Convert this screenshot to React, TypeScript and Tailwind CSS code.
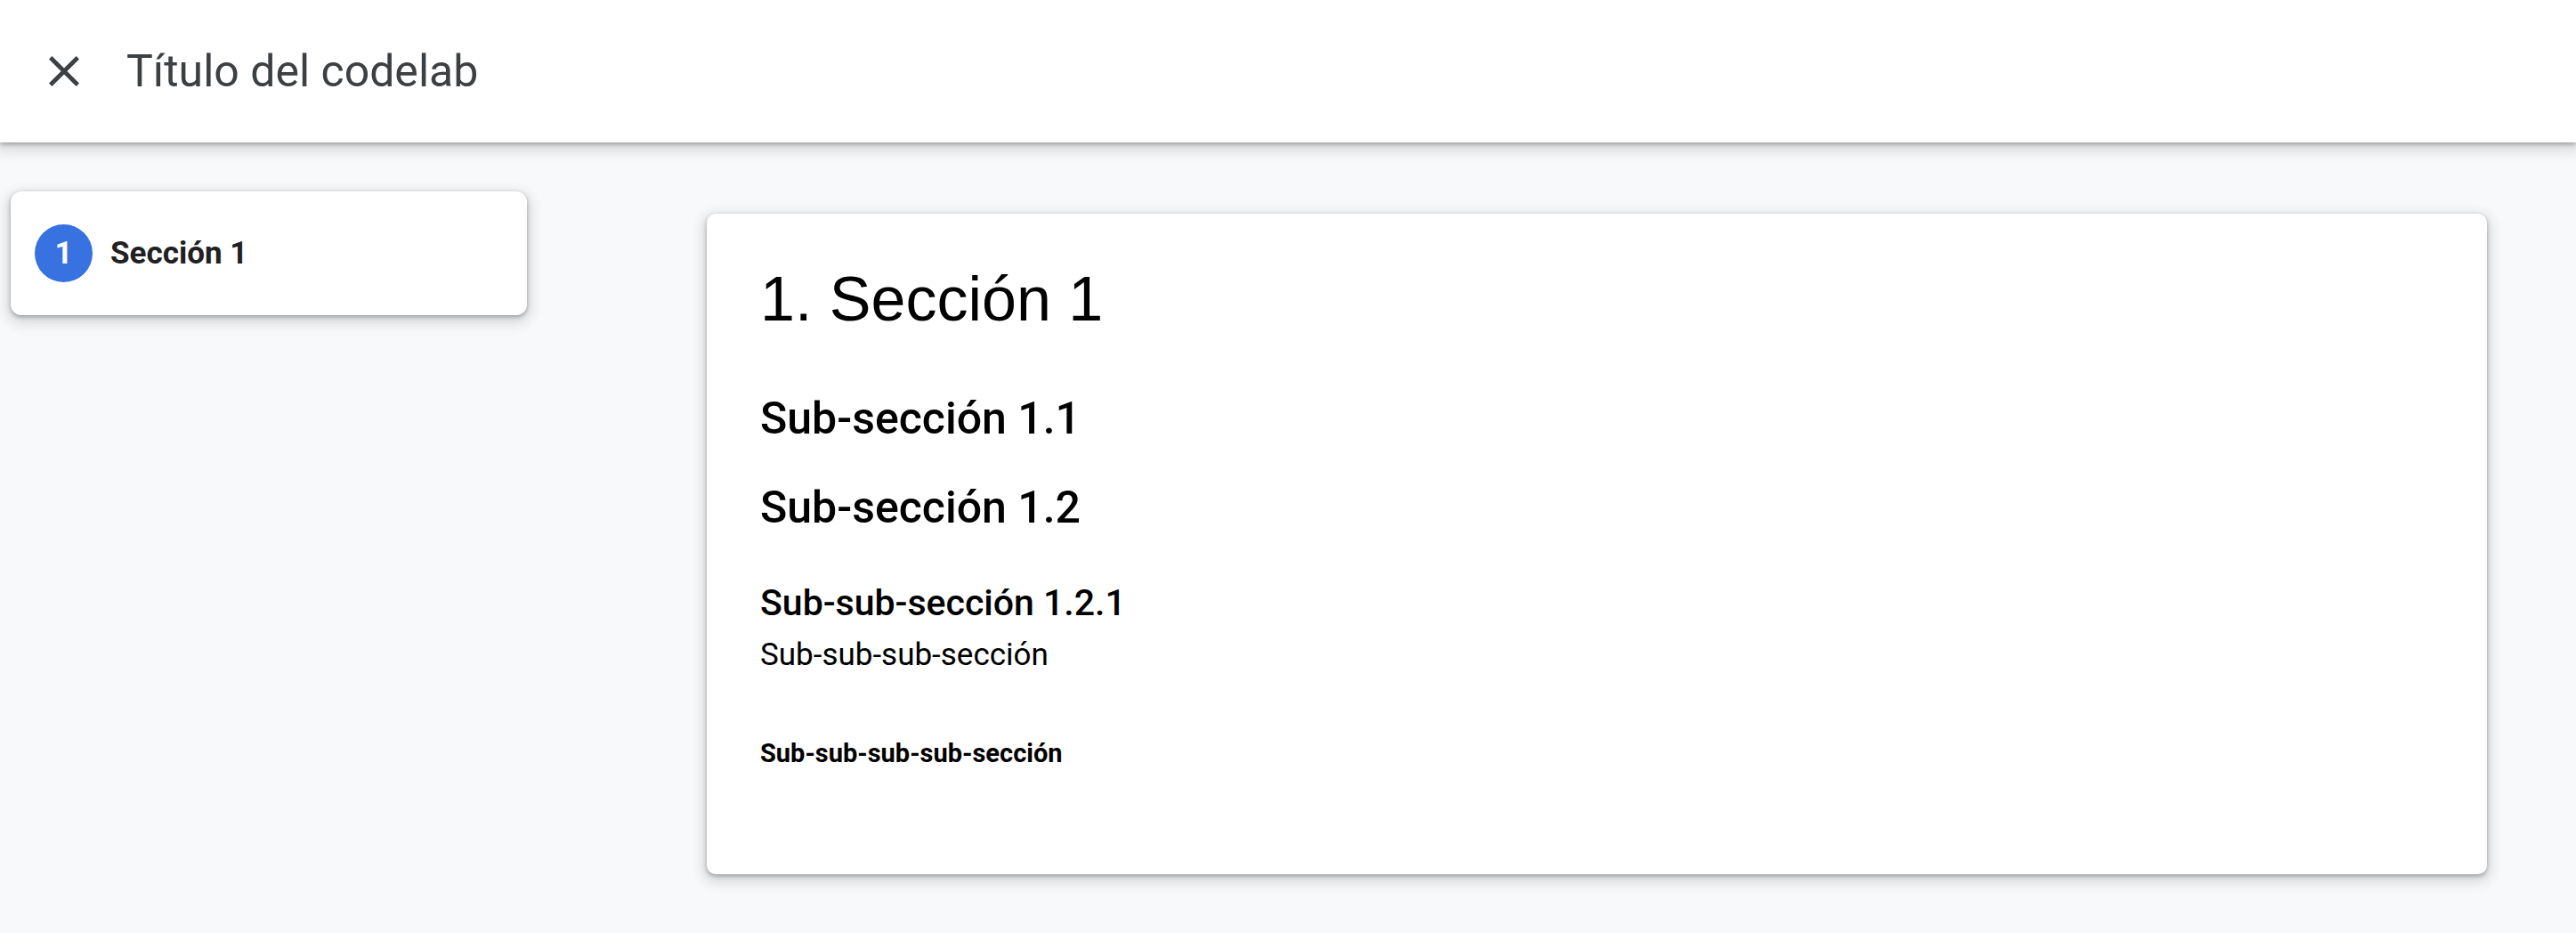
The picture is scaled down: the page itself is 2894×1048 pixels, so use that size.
import React from "react";

const steps = ["Sección 1"];

export default function App() {
  return (
    <div className="flex min-h-screen flex-col bg-[#f8f9fb] font-['Roboto',sans-serif] text-black">
      <header className="z-10 flex h-40 items-center bg-white px-12 text-[#3c4043] shadow-[0_2px_5px_rgba(0,0,0,0.3),0_5px_14px_5px_rgba(0,0,0,0.12)]">
        <button type="button" aria-label="Cerrar" className="mr-[46px] flex size-12 items-center justify-center">
          <svg viewBox="0 0 34 34" className="size-[34px] fill-current" aria-hidden="true">
            <path d="M34 3.4 30.6 0 17 13.6 3.4 0 0 3.4 13.6 17 0 30.6 3.4 34 17 20.4 30.6 34 34 30.6 20.4 17z" />
          </svg>
        </button>
        <h1 className="text-[50px] leading-[60px]">Título del codelab</h1>
      </header>
      <div className="flex flex-1 items-start">
        <nav className="w-[794px] shrink-0 pt-[55px] pl-3" aria-label="Secciones">
          <ol>
            {steps.map((step, i) => (
              <li key={step}>
                <a
                  href="#seccion-1"
                  className="flex h-[139px] w-[580px] items-center gap-5 rounded-xl bg-white px-[27px] text-[35px] leading-[54px] font-bold text-[#212121] shadow-[0_2px_5px_rgba(0,0,0,0.3),0_5px_14px_5px_rgba(0,0,0,0.12)]"
                >
                  <span className="flex size-[65px] items-center justify-center rounded-full bg-[#3871e0] text-white">
                    {i + 1}
                  </span>
                  <span>{step}</span>
                </a>
              </li>
            ))}
          </ol>
        </nav>
        <main
          id="seccion-1"
          className="mt-20 mr-[100px] flex-1 rounded-[10px] bg-white px-[60px] pt-[60px] pb-[118px] shadow-[0_2px_5px_rgba(0,0,0,0.3),0_5px_14px_5px_rgba(0,0,0,0.12)]"
        >
          <h2 className="font-['Liberation_Sans',sans-serif] text-[70px] leading-[72px]">1. Sección 1</h2>
          <h3 className="mt-[68px] text-[50px] leading-[60px] font-medium">Sub-sección 1.1</h3>
          <h3 className="mt-10 text-[50px] leading-[60px] font-medium">Sub-sección 1.2</h3>
          <h4 className="mt-[52px] text-[41px] leading-[50px] font-medium">Sub-sub-sección 1.2.1</h4>
          <h5 className="mt-3 text-[35px] leading-[44px]">Sub-sub-sub-sección</h5>
          <h6 className="mt-[70px] text-[29px] leading-[36px] font-bold">Sub-sub-sub-sub-sección</h6>
        </main>
      </div>
    </div>
  );
}
